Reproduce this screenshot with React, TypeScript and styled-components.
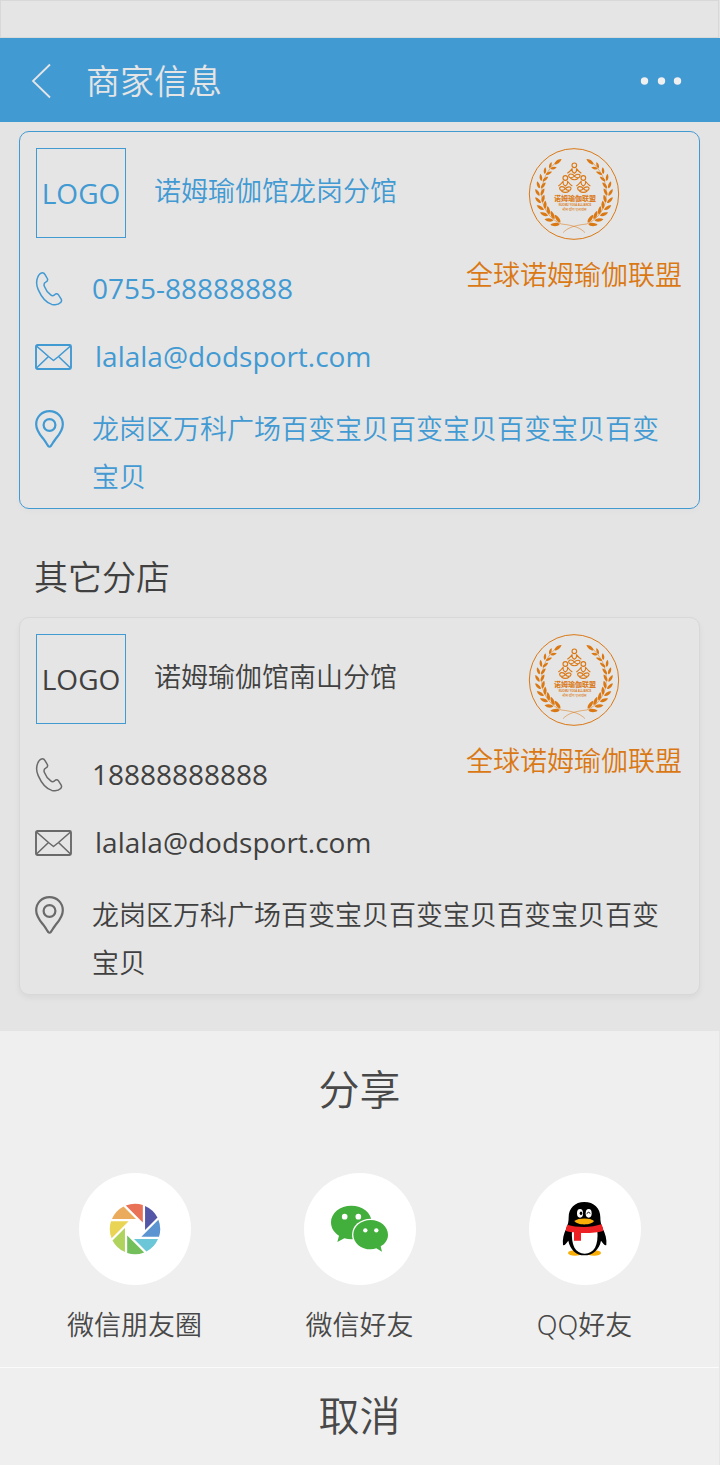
import React from "react";
import styled, { createGlobalStyle } from "styled-components";

const color = {
  page: "#e4e4e4",
  card: "#e5e5e5",
  line: "#d8d8d8",
  blue: "#429ad3",
  orange: "#da7814",
  text: "#404040",
  icon: "#6a6a6a",
  sheet: "#efefef",
  sheetText: "#484848",
};

const GlobalStyle = createGlobalStyle`
  *, *::before, *::after { box-sizing: border-box; }
  body {
    margin: 0;
    background: ${color.page};
    color: ${color.text};
    font-family: "Noto Sans", "Noto Sans CJK SC", sans-serif;
    font-weight: 350;
  }
  h1, h2, h3, p, ul { margin: 0; padding: 0; font-weight: inherit; }
  button { border: 0; padding: 0; background: none; color: inherit; font: inherit; cursor: pointer; }
  a { color: inherit; text-decoration: none; }
  svg { display: block; }
`;

const Page = styled.div`
  display: flex;
  flex-direction: column;
  min-height: 100vh;
`;

const StatusBar = styled.div`
  height: 38px;
  margin-right: 1px;
  border: 1px solid ${color.line};
  background: ${color.card};
`;

const Header = styled.header`
  display: flex;
  align-items: center;
  height: 84px;
  padding: 0 38px 0 31px;
  background: ${color.blue};
  color: #e5e5e5;
`;

const HeaderButton = styled.button`
  flex: none;
  padding: 9px 0 7px;
`;

const HeaderTitle = styled.h1`
  flex: 1;
  margin-left: 34px;
  font-family: "Noto Sans CJK SC", sans-serif;
  font-size: 34px;
  line-height: 48px;
`;

const Main = styled.main`
  padding: 9px 20px 36px 19px;
`;

const SectionTitle = styled.h2`
  margin: 42px 15px 16px;
  font-family: "Noto Sans CJK SC", sans-serif;
  font-size: 34px;
  line-height: 50px;
`;

const Card = styled.article<{ $active?: boolean }>`
  display: grid;
  grid-template-columns: 1fr auto;
  padding: 16px 17px 8px 16px;
  border: 1px solid ${(p) => (p.$active ? color.blue : color.line)};
  border-radius: 10px;
  background: ${color.card};
  color: ${(p) => (p.$active ? color.blue : color.text)};
  box-shadow: 0 3px 6px rgba(0, 0, 0, ${(p) => (p.$active ? 0.02 : 0.05)});
`;

const CardHead = styled.div`
  display: flex;
  align-items: flex-start;
  gap: 28px;
  height: 106px;
`;

const LogoBox = styled.div`
  display: flex;
  flex: none;
  align-items: center;
  justify-content: center;
  width: 90px;
  height: 90px;
  border: 1px solid ${color.blue};
  font-family: "Open Sans", sans-serif;
  font-size: 28px;
  font-weight: 400;
`;

const ShopName = styled.h3`
  font-family: "Noto Sans CJK SC", sans-serif;
  font-size: 27px;
  line-height: 84px;
`;

const Brand = styled.div`
  display: flex;
  grid-column: 2;
  grid-row: 1 / span 2;
  flex-direction: column;
  align-items: center;
  gap: 10px;
  color: ${color.orange};
`;

const BrandName = styled.p`
  font-family: "Noto Sans CJK SC", sans-serif;
  font-size: 27px;
  line-height: 48px;
`;

const InfoRow = styled.div<{ $wide?: boolean }>`
  display: flex;
  grid-column: ${(p) => (p.$wide ? "1 / -1" : "1")};
  align-items: center;
  height: 68px;
  font-family: "Open Sans", sans-serif;
  font-size: 28px;
  font-weight: 400;
`;

const AddressRow = styled.div`
  display: flex;
  grid-column: 1 / -1;
  align-items: flex-start;
  padding-top: 14px;
  padding-right: 20px;
`;

const Address = styled.p`
  font-family: "Noto Sans CJK SC", sans-serif;
  font-size: 27px;
  line-height: 48px;
`;

const IconCell = styled.span<{ $active?: boolean; $wide?: boolean }>`
  display: flex;
  flex: none;
  align-items: center;
  width: ${(p) => (p.$wide ? 60 : 57)}px;
  height: 48px;
  padding-top: 1px;
  margin-left: -1px;
  color: ${(p) => (p.$active ? color.blue : color.icon)};
`;

const Sheet = styled.section`
  display: flex;
  flex: 1;
  flex-direction: column;
  border-right: 1px solid #e6e6e6;
  background: ${color.sheet};
  color: ${color.sheetText};
`;

const SheetTitle = styled.h2`
  padding: 28px 0 54px;
  font-size: 41px;
  line-height: 60px;
  text-align: center;
`;

const ShareList = styled.ul`
  display: grid;
  grid-template-columns: repeat(3, 1fr);
  padding: 0 22px 18px;
  list-style: none;
`;

const ShareItem = styled.li`
  display: flex;
  justify-content: center;
`;

const ShareButton = styled.button`
  display: flex;
  flex-direction: column;
  align-items: center;
  gap: 16px;
  font-size: 27px;
  line-height: 48px;
`;

const ShareCircle = styled.span`
  display: flex;
  align-items: center;
  justify-content: center;
  width: 112px;
  height: 112px;
  border-radius: 50%;
  background: #fff;
`;

const CancelButton = styled.button`
  flex: 1;
  min-height: 98px;
  padding-bottom: 4px;
  border-top: 1px solid #fbfbfb;
  font-size: 41px;
  line-height: 60px;
`;

const BackIcon = () => (
  <svg width="21" height="36" viewBox="0 0 21 36" fill="none" stroke="currentColor" strokeWidth="1.8">
    <path d="M19 1.5 L2 18 L19 34.5" />
  </svg>
);

const MoreIcon = () => (
  <svg width="42" height="10" viewBox="0 0 42 10" fill="#f0f0f0">
    <circle cx="4.5" cy="5" r="3.7" />
    <circle cx="21.5" cy="5" r="3.7" />
    <circle cx="37.5" cy="5" r="3.7" />
  </svg>
);

const PhoneIcon = () => (
  <svg width="29" height="34" viewBox="0 0 29 34" fill="none" stroke="currentColor" strokeWidth="1.5" strokeLinejoin="round">
    <path d="M6.6 .9 C8.4 .5 9.4 1.4 10.2 2.8 L12.3 6.5 C13.2 8.3 12.4 9.3 10.7 10.2 C9 11.1 8.6 12.2 9.3 14.2 C10.7 18 13.2 21 16 23.2 C17.3 24.2 18.4 23.8 19.6 22.8 C21 21.4 22.4 21.4 23.5 22.9 L26.2 27.2 C26.9 28.6 26.6 29.6 25.6 30.6 C23.8 32.6 20.8 33.2 16.8 32.4 C11.4 30.8 6.2 24.4 3.2 17.6 C1.3 13.3 1.2 9.3 2.5 5.8 C3.4 3.2 4.4 1.4 6.6 .9 Z" />
  </svg>
);

const MailIcon = () => (
  <svg width="37" height="26" viewBox="0 0 37 26" fill="none" stroke="currentColor" strokeWidth="1.9" strokeLinejoin="round">
    <rect x="1" y="1" width="35" height="24" rx="1.5" />
    <path strokeWidth="1.6" d="M1.5 2 L13.5 12.5 L18.5 16.5 L23.5 12.5 L35.5 2 M13.5 12.5 L1.5 24 M23.5 12.5 L35.5 24" />
  </svg>
);

const PinIcon = () => (
  <svg width="30" height="38" viewBox="0 0 30 38" fill="none" stroke="currentColor" strokeWidth="2.2" strokeLinejoin="round">
    <path d="M14.5 1.2 C6.8 1.2 1.2 7 1.2 14.4 C1.2 20.5 5.2 24.8 8.6 29.2 C10.8 32 12 34.4 13.2 36 C14 37 15 37 15.8 36 C17 34.4 18.2 32 20.4 29.2 C23.8 24.8 27.8 20.5 27.8 14.4 C27.8 7 22.2 1.2 14.5 1.2 Z" />
    <circle cx="14.5" cy="15" r="5.9" />
  </svg>
);

/* Leaf pairs of one laurel branch, from the knot at the bottom to the tip. */
const leaves = Array.from({ length: 10 }, (_, i) => {
  const t = i / 9;
  const degrees = 113 + t * 112;
  const angle = (degrees * Math.PI) / 180;
  const radius = 97 + t * 8;
  return {
    x: 165 + Math.cos(angle) * radius,
    y: 162 + Math.sin(angle) * radius,
    heading: degrees + 90,
    size: 1 - t * 0.3,
  };
});

const Leaf = "M5 0 C9 -7 24 -8 33 0 C24 6 11 6 5 0 Z";

const Branch = () => (
  <g>
    <path d="M198 278 C185 264 165 256 127 252 C92 238 68 203 68 162 C68 122 84 90 112 66" fill="none" stroke="currentColor" strokeWidth="1.6" />
    {leaves.map((leaf, i) => (
      <g key={i} transform={`translate(${leaf.x} ${leaf.y}) scale(${leaf.size})`}>
        <path d={Leaf} transform={`rotate(${leaf.heading - 28})`} />
        <path d={Leaf} transform={`rotate(${leaf.heading + 31})`} />
      </g>
    ))}
    <path d={Leaf} transform="translate(103 76) rotate(-38) scale(.95)" />
  </g>
);

const Yogi = ({ x, y }: { x: number; y: number }) => (
  <g transform={`translate(${x} ${y})`} fill="none" stroke="currentColor" strokeWidth="3.4">
    <circle cx="0" cy="-17" r="7" />
    <path d="M-6 -8 C-10 -3 -14 3 -21 7 M6 -8 C10 -3 14 3 21 7 M-6 -8 C-8 -2 -5 4 0 7 C5 4 8 -2 6 -8" />
    <path d="M0 15 C-6 6 -18 8 -17 15 C-16 22 -6 22 0 15 C6 8 18 8 17 15 C16 22 6 22 0 15 M-12 22 C-5 27 5 27 12 22" />
  </g>
);

const Emblem = () => (
  <svg width="92" height="92" viewBox="27 24 276 276" fill="currentColor" role="img" aria-label="诺姆瑜伽联盟">
    <ellipse cx="165" cy="162" rx="134" ry="136" fill="none" stroke="currentColor" strokeWidth="3" />
    <Branch />
    <g transform="translate(330 0) scale(-1 1)">
      <Branch />
    </g>
    <Yogi x={166} y={93} />
    <Yogi x={139} y={131} />
    <Yogi x={193} y={131} />
    <g textAnchor="middle">
      <text x="168" y="184" fontFamily="Noto Sans CJK SC, sans-serif" fontSize="21" fontWeight="700">诺姆瑜伽联盟</text>
      <text x="168" y="197" fontFamily="Liberation Sans, sans-serif" fontSize="8" fontWeight="700">NUOMU YOGA ALLIANCE</text>
      <text x="166" y="212" fontFamily="Noto Sans, sans-serif" fontSize="12" fontWeight="400">नोम योग एलायंस</text>
    </g>
  </svg>
);

const blades = ["#e87156", "#5356a7", "#5b94d1", "#6bc6d7", "#72bf5b", "#afd35d", "#e9d455", "#ebab5c"];

const MomentsIcon = () => (
  <svg width="52" height="52" viewBox="-26 -26 52 52">
    {blades.map((fill, i) => (
      <path key={fill} fill={fill} transform={`rotate(${i * 45})`} d="M-9.2 -23.4 A25.2 25.2 0 0 1 7.8 -24 L7.8 -6.4 Z" />
    ))}
  </svg>
);

const WechatIcon = () => (
  <svg width="59" height="48" viewBox="120 138 177 144" fill="#42ae3c">
    <path d="M184 140 C150 140 123 162 123 190 C123 207 132 221 147 230 L142 249 L163 238 C170 240 177 241 184 241 C218 241 245 219 245 190 C245 162 218 140 184 140 Z" />
    <ellipse cx="242" cy="227" rx="56" ry="48" fill="#fff" />
    <path d="M242 183 C213 183 190 203 190 227 C190 252 213 271 242 271 C248 271 254 270 259 268 L276 278 L272 262 C286 254 294 241 294 227 C294 203 271 183 242 183 Z" />
    <g fill="#fff">
      <circle cx="164" cy="173" r="8.5" />
      <circle cx="205" cy="173" r="8.5" />
      <circle cx="226" cy="214" r="6.5" />
      <circle cx="259" cy="214" r="6.5" />
    </g>
  </svg>
);

const QqIcon = () => (
  <svg width="47" height="56" viewBox="157 125 141 168">
    <g fill="#f9ae08">
      <ellipse cx="199" cy="281" rx="21" ry="8" />
      <ellipse cx="256" cy="281" rx="21" ry="8" />
    </g>
    <path d="M227 128 C199 128 180 146 180 174 C180 187 178 196 173 207 C165 224 161 240 163 257 C167 260 172 253 179 244 C184 271 203 288 227 288 C252 288 272 271 277 244 C284 253 289 260 293 257 C295 240 290 224 282 207 C277 196 275 187 275 174 C275 146 256 128 227 128 Z" />
    <path d="M190 213 C187 259 200 283 228 283 C256 283 270 259 266 213 Z" fill="#fff" />
    <path d="M176 196 C205 205 250 205 278 195 C282 202 284 208 283 215 C265 220 240 222 217 221 V244 H196 V219 C188 219 180 217 172 215 C172 208 173 202 176 196 Z" fill="#ed2024" />
    <g fill="#fff">
      <ellipse cx="214" cy="162" rx="9" ry="13" />
      <ellipse cx="240" cy="162" rx="9" ry="13" />
    </g>
    <ellipse cx="217" cy="162" rx="4" ry="5.5" />
    <path d="M234 163 Q239 155 245 162" fill="none" stroke="#000" strokeWidth="3" />
    <path d="M197 185 C209 175 246 175 256 185 C249 198 206 199 197 185 Z" fill="#f9ae08" />
  </svg>
);

type Shop = { name: string; phone: string; email: string; address: string };

const ShopCard = ({ shop, active }: { shop: Shop; active?: boolean }) => (
  <Card $active={active}>
    <CardHead>
      <LogoBox>LOGO</LogoBox>
      <ShopName>{shop.name}</ShopName>
    </CardHead>
    <Brand>
      <Emblem />
      <BrandName>全球诺姆瑜伽联盟</BrandName>
    </Brand>
    <InfoRow>
      <IconCell $active={active}><PhoneIcon /></IconCell>
      <a href={`tel:${shop.phone}`}>{shop.phone}</a>
    </InfoRow>
    <InfoRow $wide>
      <IconCell $active={active} $wide><MailIcon /></IconCell>
      <a href={`mailto:${shop.email}`}>{shop.email}</a>
    </InfoRow>
    <AddressRow>
      <IconCell $active={active}><PinIcon /></IconCell>
      <Address>{shop.address}</Address>
    </AddressRow>
  </Card>
);

const current: Shop = {
  name: "诺姆瑜伽馆龙岗分馆",
  phone: "0755-88888888",
  email: "lalala@dodsport.com",
  address: "龙岗区万科广场百变宝贝百变宝贝百变宝贝百变宝贝",
};

const branch: Shop = { ...current, name: "诺姆瑜伽馆南山分馆", phone: "18888888888" };

const targets = [
  { label: "微信朋友圈", icon: <MomentsIcon /> },
  { label: "微信好友", icon: <WechatIcon /> },
  { label: "QQ好友", icon: <QqIcon /> },
];

export default function App() {
  return (
    <Page lang="zh-CN">
      <GlobalStyle />
      <StatusBar />
      <Header>
        <HeaderButton type="button" aria-label="返回"><BackIcon /></HeaderButton>
        <HeaderTitle>商家信息</HeaderTitle>
        <HeaderButton type="button" aria-label="更多"><MoreIcon /></HeaderButton>
      </Header>
      <Main>
        <ShopCard shop={current} active />
        <SectionTitle>其它分店</SectionTitle>
        <ShopCard shop={branch} />
      </Main>
      <Sheet aria-label="分享">
        <SheetTitle>分享</SheetTitle>
        <ShareList>
          {targets.map((target) => (
            <ShareItem key={target.label}>
              <ShareButton type="button">
                <ShareCircle>{target.icon}</ShareCircle>
                {target.label}
              </ShareButton>
            </ShareItem>
          ))}
        </ShareList>
        <CancelButton type="button">取消</CancelButton>
      </Sheet>
    </Page>
  );
}
